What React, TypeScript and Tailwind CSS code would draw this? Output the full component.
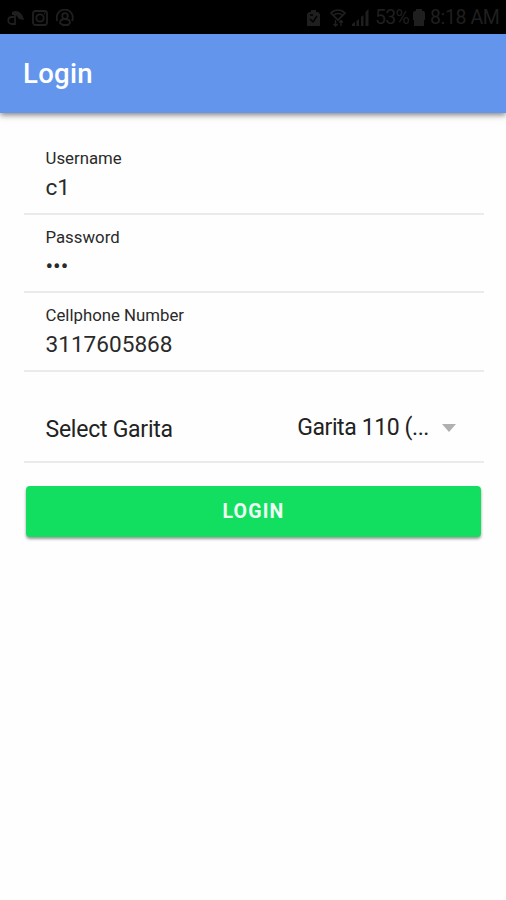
import React from 'react'

interface FieldProps {
    label: string
    value: string
    className?: string
}

function Field({ label, value, className = '' }: FieldProps) {
    return (
        <div className={`border-b-2 border-[#ebebeb] pl-[21.500px] text-[#2a2a2a] ${className}`}>
            <p className="text-[16.8px] leading-5">{label}</p>
            <p className="mt-[7px] text-[22.6px] leading-[26px]">{value}</p>
        </div>
    )
}

function StatusBar() {
    return (
        <div className="flex h-[34px] items-center justify-between bg-black pl-[7px] pr-[7px] pt-[2px] text-[#1f1f1f]">
            <div className="flex items-center gap-[8px]">
                <svg width="17" height="18" viewBox="0 0 17 18" fill="none">
                    <path d="M5 6V3c6-3 11 2 12 8l-5-1-3-4Z" fill="currentColor" />
                    <path d="M8 6v9H5c-5 0-5-7 0-7h2" stroke="currentColor" strokeWidth="1.8" />
                </svg>
                <svg width="16" height="16" viewBox="0 0 16 16" fill="none" stroke="currentColor" strokeWidth="1.8">
                    <rect x="1" y="1" width="14" height="14" rx="2.5" />
                    <circle cx="8" cy="8" r="3.7" />
                    <path d="M12 3.5h1" />
                </svg>
                <svg width="18" height="18" viewBox="0 0 18 18" fill="none" stroke="currentColor" strokeWidth="1.8">
                    <path d="M1.5 12A8 8 0 1 1 16 12" />
                    <circle cx="9" cy="7" r="2.8" />
                    <path d="M9 10c-4 0-5 2-5 4l3 2h5l2-2c0-2-1-4-5-4Z" />
                </svg>
            </div>
            <div className="flex items-center">
                <svg width="13" height="18" viewBox="0 0 13 18" fill="none">
                    <path d="M4 1h5v2h2l2 2v12H0V5l2-2h2Z" fill="currentColor" />
                    <path d="m3 10 3 3 4-6M3 6h3" stroke="#000" strokeWidth="1.4" />
                </svg>
                <svg className="ml-[10px]" width="16" height="18" viewBox="0 0 16 18" fill="none" stroke="currentColor" strokeWidth="1.6">
                    <path d="M1 4c4-4 10-4 14 0L8 11ZM4 6c2-2 6-2 8 0" />
                    <path d="M5.5 11v6M3.5 15l2 2 2-2M11 17v-5M9 13.5l2-2 2 2" strokeWidth="1.4" />
                </svg>
                <svg className="ml-[6px]" width="17" height="18" viewBox="0 0 17 18" fill="currentColor">
                    <path d="M0 17v-2l3-2v4ZM4.5 12 7 10v7H4.5ZM9 8l2.5-2v11H9ZM13.5 3 16.5 0v17h-3Z" />
                </svg>
                <span className="ml-[6px] w-[34px] whitespace-nowrap text-[19.5px] leading-5 tracking-[-0.7px]">53%</span>
                <svg className="ml-[4px]" width="12" height="18" viewBox="0 0 12 18" fill="currentColor">
                    <path d="M3 0h6v2h2l1 2v7H0V4l1-2h2ZM1 11h10v6H1Z" />
                </svg>
                <span className="ml-[5px] w-[69px] whitespace-nowrap text-[19.5px] leading-5 tracking-[-0.4px]">8:18 AM</span>
            </div>
        </div>
    )
}

export default function App() {
    return (
        <div className="flex h-[900px] w-[506px] flex-col overflow-hidden bg-[#fefefe] font-['Roboto',sans-serif]">
            <StatusBar />
            <header className="flex h-[79px] items-center bg-[#6495ed] pl-[23px] shadow-[0_2px_6px_rgba(0,0,0,0.5)]">
                <h1 className="text-[27.5px] font-medium leading-8 tracking-[0.3px] text-white">Login</h1>
            </header>

            <main className="pl-[24px] pr-[22px] pt-6">
                <Field label="Username" value="c1" className="h-[78px] pt-[11px]" />
                <Field label="Password" value="•••" className="h-[78px] pt-[12px]" />
                <Field label="Cellphone Number" value="3117605868" className="h-[79px] pt-[12px]" />

                <div className="flex h-[91px] items-center justify-between border-b-2 border-[#ebebeb] pl-[21.5px] pr-[28px] pt-[26px] text-[#222]">
                    <span className="text-[23px] leading-7 tracking-[-0.25px]">Select Garita</span>
                    <div className="flex items-center pb-[4px]">
                        <span className="text-[23px] leading-7 tracking-[-0.4px]">Garita 110 (...</span>
                        <svg className="ml-[13px]" width="14" height="8" viewBox="0 0 14 8">
                            <path d="M0 0h14L7 8Z" fill="#b0b0b0" />
                        </svg>
                    </div>
                </div>

                <button className="ml-[2px] mt-[23px] block h-[51px] w-[455px] rounded-[4px] bg-[#12df60] text-[19.5px] font-bold tracking-[1.2px] text-[#f0fff5] shadow-[0_2px_3px_rgba(0,0,0,0.4)]">
                    LOGIN
                </button>
            </main>
        </div>
    )
}
